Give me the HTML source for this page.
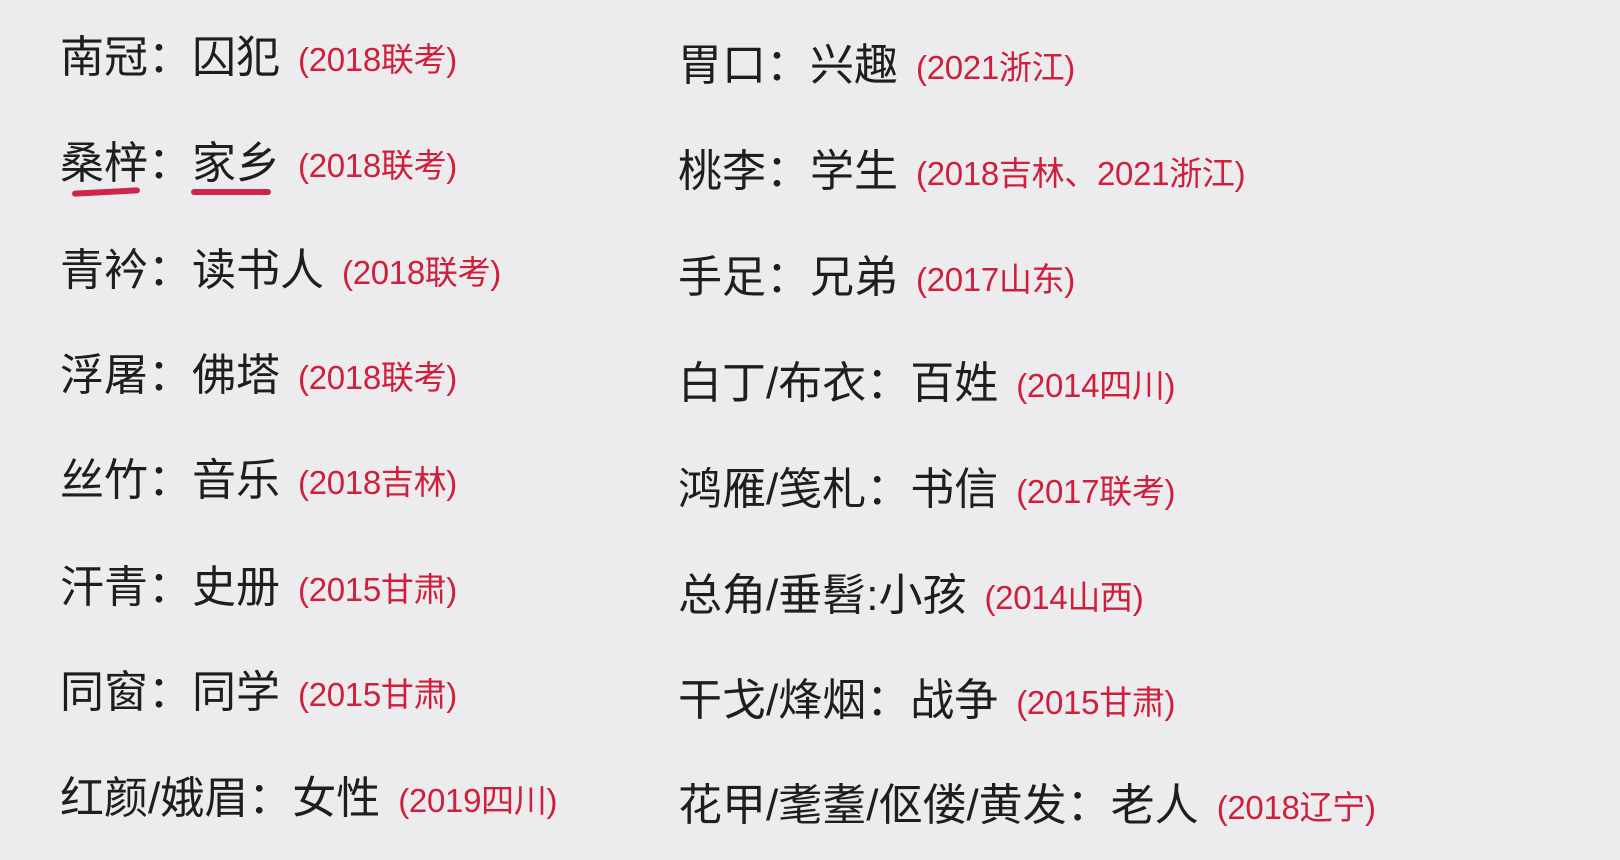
<!DOCTYPE html>
<html><head><meta charset="utf-8"><style>
body{margin:0;width:1620px;height:860px;background:#ececee;overflow:hidden;position:relative;font-family:"Liberation Sans","Noto Sans CJK SC",sans-serif;}
.r{position:absolute;display:flex;align-items:center;white-space:nowrap;color:#1e1e1e;font-size:44px;line-height:60px;height:60px;}
.r s{text-decoration:none;color:#cf1f3c;font-size:33px;margin-left:18px;letter-spacing:-0.3px;position:relative;top:2px;}
.u{position:absolute;height:6px;background:#d0244c;border-radius:3px;}
</style></head><body>
<div class="r" style="left:60px;top:28px">南冠：囚犯<s>(2018联考)</s></div>
<div class="r" style="left:60px;top:134px">桑梓：家乡<s>(2018联考)</s></div>
<div class="r" style="left:60px;top:241px">青衿：读书人<s>(2018联考)</s></div>
<div class="r" style="left:60px;top:346px">浮屠：佛塔<s>(2018联考)</s></div>
<div class="r" style="left:60px;top:451px">丝竹：音乐<s>(2018吉林)</s></div>
<div class="r" style="left:60px;top:558px">汗青：史册<s>(2015甘肃)</s></div>
<div class="r" style="left:60px;top:663px">同窗：同学<s>(2015甘肃)</s></div>
<div class="r" style="left:60px;top:769px">红颜/娥眉：女性<s>(2019四川)</s></div>
<div class="u" style="left:72px;top:189px;width:68px;transform:rotate(-3deg)"></div>
<div class="u" style="left:191px;top:189px;width:80px"></div>
<div class="r" style="left:678px;top:36px">胃口：兴趣<s>(2021浙江)</s></div>
<div class="r" style="left:678px;top:142px">桃李：学生<s>(2018吉林、2021浙江)</s></div>
<div class="r" style="left:678px;top:248px">手足：兄弟<s>(2017山东)</s></div>
<div class="r" style="left:678px;top:354px">白丁/布衣：百姓<s>(2014四川)</s></div>
<div class="r" style="left:678px;top:460px">鸿雁/笺札：书信<s>(2017联考)</s></div>
<div class="r" style="left:678px;top:566px">总角/垂髫:小孩<s>(2014山西)</s></div>
<div class="r" style="left:678px;top:671px">干戈/烽烟：战争<s>(2015甘肃)</s></div>
<div class="r" style="left:678px;top:776px">花甲/耄耋/伛偻/黄发：老人<s>(2018辽宁)</s></div>
</body></html>
